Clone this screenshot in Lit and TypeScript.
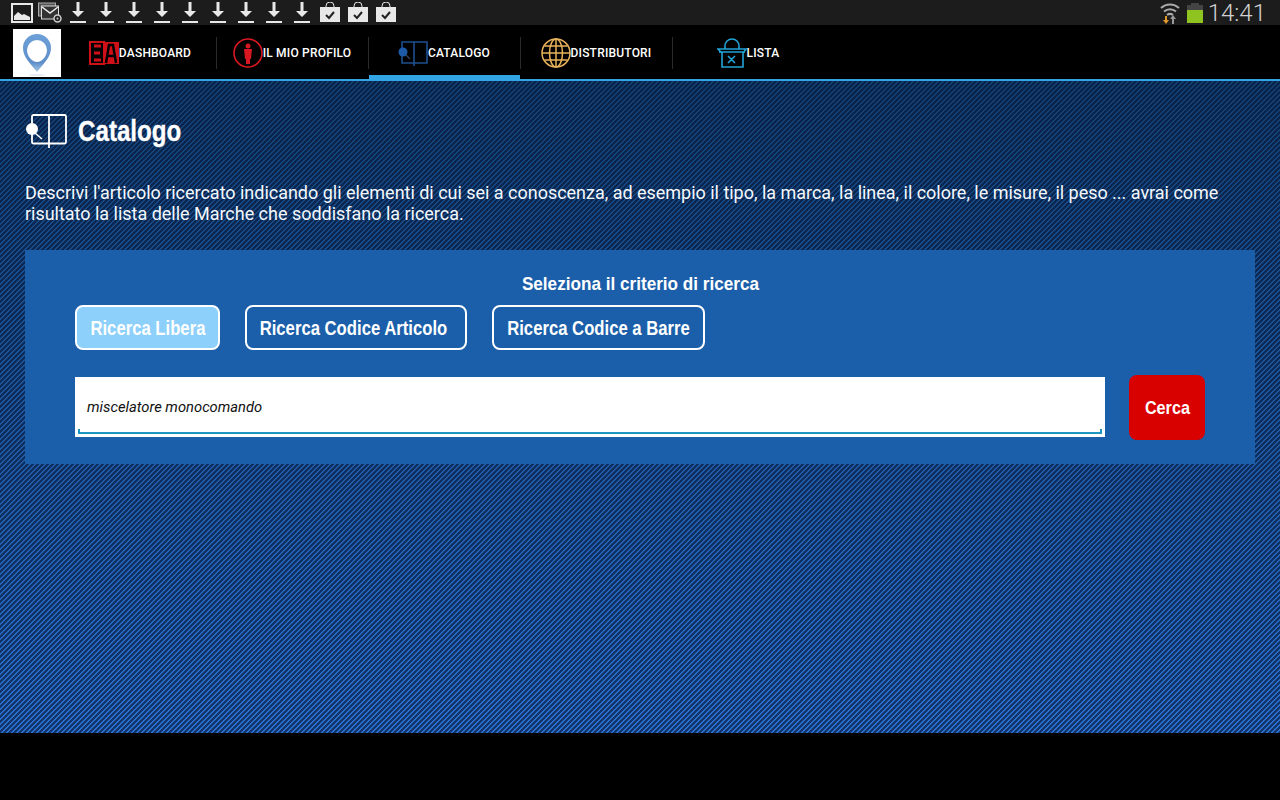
import { LitElement, html, css, svg } from "lit";
import { customElement } from "lit/decorators.js";

const arrow = svg`<svg width="16" height="24" viewBox="0 0 16 24"><path d="M6.500 1h3v9h4.500L8 16 2 10h4.500z" fill="#e8e8e8"/><rect y="20" width="16" height="2" fill="#e8e8e8"/></svg>`;
const bag = svg`<svg width="20" height="22" viewBox="0 0 20 22"><path d="M6 6V4a4 4 0 0 1 8 0v2" fill="none" stroke="#e4e4e4" stroke-width="1"/><rect y="5" width="20" height="15" fill="#e8e8e8"/><path d="M6 13l3 3 5-6" fill="none" stroke="#222" stroke-width="2"/></svg>`;

@customElement("app-root")
export class AppRoot extends LitElement {
  static styles = css`
    :host { display: block; width: 1280px; height: 800px; background: #000; font-family: Roboto, sans-serif; overflow: hidden; }
    .status { height: 25px; background: #1c1c1c; display: flex; align-items: center; padding: 0 14px 0 8px; box-sizing: border-box; }
    .slot { width: 28px; height: 25px; display: flex; align-items: center; justify-content: center; }
    .spacer { flex: 1; }
    .time { font-size: 24px; font-weight: 300; color: #d0d0d0; margin-left: 5px; line-height: 23px; height: 23px; padding-top: 2px; }
    .batt { margin-left: 7px; display: block; }
    .nav { height: 56px; background: #000; border-bottom: 2px solid #33a5e5; box-sizing: border-box; display: flex; }
    .logo { width: 48px; height: 48px; background: #fff; margin: 4px 3px 0 13px; }
    .logo svg { display: block; }
    .tab { width: 152px; height: 54px; padding-top: 2px; display: flex; align-items: center; justify-content: center; position: relative; color: #fff; font-size: 12px; font-weight: 500; letter-spacing: 0.2px; box-sizing: border-box; }
    .tab + .tab::before { content: ""; position: absolute; left: 0; top: 12px; height: 32px; width: 1px; background: #2a2a2a; }
    .tab.active::after { content: ""; position: absolute; left: 1px; right: 0; bottom: 0; height: 4px; background: #33a5e5; }
    .content { height: 652px; box-sizing: border-box; padding: 32px 25px 0; color: #fff;
      background:
        linear-gradient(135deg, rgba(4,18,48,.62) 25%, transparent 25% 50%, rgba(4,18,48,.62) 50% 75%, transparent 75%) 0 0 / 5px 5px,
        linear-gradient(#123f72, #2a70cf); }
    .head { display: flex; align-items: center; height: 36px; }
    h1 { margin: 0 0 0 11px; font: 700 29px/36px "Liberation Sans", sans-serif; -webkit-text-stroke: 0.3px #fff; transform-origin: left center; transform: scaleX(.833); }
    .desc { margin: 33px 0 0; font-size: 18px; line-height: 21px; letter-spacing: -0.02px; color: #f4f8fc; }
    .panel { margin-top: 26px; height: 214px; background: #1b5ea9; box-sizing: border-box; padding: 22px 50px 0; }
    .crit { text-align: center; font: 700 19px/24px "Liberation Sans", sans-serif; }
    .crit span { display: inline-block; transform: scaleX(.902); }
    .btns { display: flex; gap: 25px; margin-top: 9px; }
    .btn { height: 45px; box-sizing: border-box; border: 2px solid #fff; border-radius: 8px; padding-top: 2px; display: flex; align-items: center; justify-content: center; font: 700 20px "Liberation Sans", sans-serif; color: #fff; white-space: nowrap; }
    .btn span { display: inline-block; transform: scaleX(.834); }
    .btn.on { background: #8dd0fb; }
    .w1 { width: 145px; }
    .w2 { width: 222px; padding-right: 6px; }
    .w3 { width: 213px; }
    .row { display: flex; align-items: flex-start; margin-top: 25px; gap: 24px; }
    .input { width: 1030px; height: 60px; margin-top: 2px; background: #fff; box-sizing: border-box; padding: 0 12px; display: flex; align-items: center; font-style: italic; font-size: 14.75px; color: #111; position: relative; }
    .input::after { content: ""; position: absolute; left: 3px; right: 3px; bottom: 3px; height: 5px; border: 2px solid #1d97c1; border-top: 0; box-sizing: border-box; }
    .cerca { width: 76px; height: 65px; background: #d90000; border-radius: 8px; display: flex; align-items: center; justify-content: center; font: 700 19px "Liberation Sans", sans-serif; color: #fff; }
    .cerca span { display: inline-block; transform: scaleX(.853); }
  `;

  render() {
    return html`
      <div class="status">
        <div class="slot"><svg width="22" height="20" viewBox="0 0 22 20"><rect x="1" y="1" width="20" height="18" fill="none" stroke="#e8e8e8" stroke-width="2"/><path d="M3 17v-4l4-4 4 3 2-1 6 3v3z" fill="#e8e8e8"/></svg></div>
        <div class="slot"><svg width="24" height="22" viewBox="0 0 24 22"><rect x="0.500" y="1" width="17" height="13" fill="#555" stroke="#aaa"/><rect x="3.500" y="4" width="17" height="13" fill="#333" stroke="#ddd"/><path d="M4 5l8 6 8-6" fill="none" stroke="#eee" stroke-width="1.500"/><circle cx="19.500" cy="16.500" r="3.500" fill="#222" stroke="#ccc" stroke-width="1.500"/><circle cx="19.500" cy="16.500" r="1" fill="#ccc"/></svg></div>
        ${Array.from({ length: 9 }, () => html`<div class="slot">${arrow}</div>`)}
        ${Array.from({ length: 3 }, () => html`<div class="slot">${bag}</div>`)}
        <div class="spacer"></div>
        <svg width="20" height="24" viewBox="0 0 20 24"><path d="M1 7a13 13 0 0 1 18 0M4 10.500a9 9 0 0 1 12 0M7 14a5 5 0 0 1 6 0" fill="none" stroke="#aaa" stroke-width="2"/><path d="M5 15h2v4h2l-3 4-3-4h2z" fill="#e09a2b"/><path d="M13 14l3 4h-2v5h-2v-5h-2z" fill="#999"/></svg>
        <svg class="batt" width="16" height="20" viewBox="0 0 16 20"><rect x="4" y="0" width="8" height="2" fill="#444"/><rect y="2" width="16" height="6" fill="#444"/><rect y="7" width="16" height="13" fill="#8fc31f"/></svg>
        <div class="time">14:41</div>
      </div>
      <div class="nav">
        <div class="logo"><svg width="48" height="48" viewBox="0 0 48 48"><defs><linearGradient id="pin" x1="0" y1="0" x2="0" y2="1"><stop offset="0" stop-color="#6d9fd8"/><stop offset=".75" stop-color="#5e8fca"/><stop offset="1" stop-color="#a8c8e4"/></linearGradient></defs><path d="M24 43C17 34 10 28 10 19a14 14 0 0 1 28 0c0 9-7 15-14 24z" fill="url(#pin)"/><path d="M24 33c-5 0-10-6-10-12a10 10 0 0 1 20 0c0 6-5 12-10 12z" fill="#fff"/><ellipse cx="24" cy="46" rx="8" ry="1" fill="#e6ebf2"/></svg></div>
        <div class="tab"><svg width="30" height="24" viewBox="0 0 30 24"><rect x="1" y="1" width="14" height="22" fill="none" stroke="#d01018" stroke-width="2"/><path d="M5 5h7M5 12h6M5 19h7" stroke="#d01018" stroke-width="3"/><rect x="14" y="1" width="16" height="22" fill="#d01018"/><path d="M17 22l3-18h4l3 18M19 15h6" fill="none" stroke="#000" stroke-width="2.500"/></svg>DASHBOARD</div>
        <div class="tab"><svg width="30" height="30" viewBox="0 0 30 30"><circle cx="15" cy="15" r="14" fill="none" stroke="#d81820" stroke-width="1.600"/><circle cx="15" cy="8" r="2.500" fill="#d81820"/><path d="M11 11h8l-1 10h-1v5h-4v-5h-1z" fill="#d81820"/></svg>IL MIO PROFILO</div>
        <div class="tab active"><svg width="30" height="26" viewBox="0 0 30 26"><path d="M4 2h25v21H4zM16 2v24" fill="none" stroke="#1d4f8f" stroke-width="1.600"/><circle cx="5" cy="12" r="4.500" fill="#1d5aa8"/><path d="M8 15l4 4" stroke="#345" stroke-width="1.400"/></svg>CATALOGO</div>
        <div class="tab"><svg width="30" height="30" viewBox="0 0 30 30" fill="none" stroke="#e8b25a" stroke-width="1.500"><circle cx="15" cy="15" r="14"/><ellipse cx="15" cy="15" rx="6.500" ry="14"/><path d="M15 1v28M1 15h28M3.500 8h23M3.500 22h23"/></svg>DISTRIBUTORI</div>
        <div class="tab"><svg width="30" height="30" viewBox="0 0 30 30" fill="none" stroke="#22a3d6" stroke-width="1.600"><path d="M8 11V8a7 7 0 0 1 14 0v3M1 11h28l-3 4v14H5V15zM2 14h26M11 18l7 7M18 18l-7 7"/></svg>LISTA</div>
      </div>
      <div class="content">
        <div class="head"><svg width="42" height="34" viewBox="0 0 42 34"><rect x="7" y="1" width="34" height="28.500" rx="1.500" fill="none" stroke="#fff" stroke-width="1.800"/><path d="M24 1v33" stroke="#fff" stroke-width="1.800"/><circle cx="7" cy="15" r="6" fill="#fff"/><path d="M10 19l7 6" stroke="#fff" stroke-width="1.500"/></svg><h1>Catalogo</h1></div>
        <p class="desc">Descrivi l'articolo ricercato indicando gli elementi di cui sei a conoscenza, ad esempio il tipo, la marca, la linea, il colore, le misure, il peso ... avrai come risultato la lista delle Marche che soddisfano la ricerca.</p>
        <div class="panel">
          <div class="crit"><span>Seleziona il criterio di ricerca</span></div>
          <div class="btns">
            <div class="btn on w1"><span>Ricerca Libera</span></div>
            <div class="btn w2"><span>Ricerca Codice Articolo</span></div>
            <div class="btn w3"><span>Ricerca Codice a Barre</span></div>
          </div>
          <div class="row">
            <div class="input">miscelatore monocomando</div>
            <div class="cerca"><span>Cerca</span></div>
          </div>
        </div>
      </div>
    `;
  }
}
